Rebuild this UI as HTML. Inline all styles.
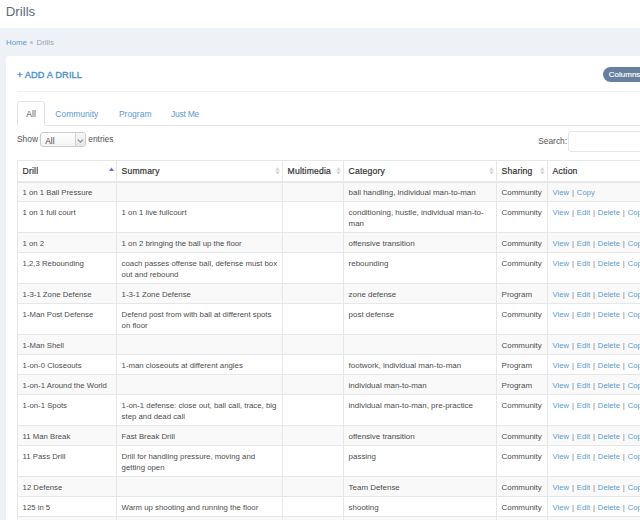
<!DOCTYPE html>
<html><head><meta charset="utf-8"><style>
*{box-sizing:border-box}
html,body{margin:0;padding:0}
body{width:640px;height:520px;overflow:hidden;background:#eef1f5;font-family:"Liberation Sans",sans-serif;position:relative;color:#333}
div,span{white-space:nowrap}
.hdr{position:absolute;left:0;top:0;width:640px;height:27.5px;background:#fff}
.title{position:absolute;left:5.7px;top:3.9px;font-size:13.3px;line-height:15px;color:#5e6d79}
.bc{position:absolute;left:6px;top:37.8px;font-size:7.8px;line-height:9px}
.bc .home{color:#5b9bd1}
.bc .dot{display:inline-block;width:3px;height:3px;border-radius:50%;background:#b9c1c9;margin:0 3.2px 1px 3.6px;vertical-align:middle}
.bc .cur{color:#9aa4ad}
.panel{position:absolute;left:6px;top:56px;width:700px;height:600px;background:#fff;border-radius:3px}
.add{position:absolute;left:17px;top:70.1px;font-size:9.3px;line-height:11px;color:#4b8fd0;-webkit-text-stroke:0.35px #4b8fd0;letter-spacing:0.1px}
.colbtn{position:absolute;left:603px;top:67px;width:60px;height:15.4px;border-radius:8px;background:#67809f;color:#fff;font-size:8px;line-height:15.4px;padding-left:5.8px;-webkit-text-stroke:0.15px #fff}
.div1{position:absolute;left:17px;top:90.5px;width:640px;height:1px;background:#eef1f5}
.tabline{position:absolute;left:17px;top:124.6px;width:640px;height:1px;background:#e2e4e6}
.tab{position:absolute;top:106.6px;font-size:8.5px;line-height:14px;color:#5b9bd1}
.tab.act{left:17.3px;top:101.2px;width:27.6px;height:24.4px;border:1px solid #e2e4e6;border-bottom:1px solid #fff;border-radius:3px 3px 0 0;background:#fff;color:#555;text-align:center;line-height:25.2px}
.show{position:absolute;left:17px;top:133.9px;font-size:8.4px;line-height:10px;color:#555}
.sel{position:absolute;left:39.8px;top:131.7px;width:46px;height:15px;border:1px solid #c9cdd1;border-radius:3px;background:linear-gradient(#fff,#f3f3f3)}
.sel .t{position:absolute;left:4.4px;top:3.1px;font-size:8.4px;line-height:10px;color:#444}
.sel .arr{position:absolute;left:34.5px;top:0;width:9.5px;height:13px;border-left:1px solid #cfd3d7;background:linear-gradient(#f7f7f7,#e6e6e6);border-radius:0 2px 2px 0}
.entries{position:absolute;left:88.3px;top:133.9px;font-size:8.4px;line-height:10px;color:#555}
.search{position:absolute;left:538.2px;top:136px;font-size:8.4px;line-height:10px;color:#555}
.sinput{position:absolute;left:568.2px;top:131.4px;width:100px;height:20.3px;border:1px solid #e1e5ec;border-radius:3px;background:#fff}
.tbl{position:absolute;left:0;top:0;width:640px;height:520px}
.hl{position:absolute;height:1px;background:#e5e7e9}
.vl{position:absolute;width:1px;background:#e5e7e9}
.bg{position:absolute;background:#f9f9f9}
.c{position:absolute;font-size:7.7px;line-height:11px;color:#4d4d4d}
.h{position:absolute;font-size:8.6px;line-height:12px;color:#333;font-weight:normal;-webkit-text-stroke:0.2px #333;letter-spacing:0.18px}
a{color:#5b9bd1;text-decoration:none}
s{text-decoration:none;color:#777;margin:0 0.8px}
.sort{position:absolute;width:5px;height:8px}
</style></head><body>
<div class="hdr"><div class="title">Drills</div></div>
<div class="bc"><span class="home">Home</span><span class="dot"></span><span class="cur">Drills</span></div>
<div class="panel"></div>
<div class="add">+ ADD A DRILL</div>
<div class="colbtn">Columns</div>
<div class="div1"></div>
<div class="tabline"></div>
<div class="tab act">All</div>
<div class="tab" style="left:55.3px">Community</div>
<div class="tab" style="left:118.9px">Program</div>
<div class="tab" style="left:171px;letter-spacing:-0.25px">Just Me</div>
<div class="show">Show</div>
<div class="sel"><span class="t">All</span><span class="arr"><svg style="position:absolute;left:1.2px;top:6.6px" width="7" height="5" viewBox="0 0 7 5"><path d="M0.8 0.6L3.4 3.2L6 0.6" fill="none" stroke="#8e8e8e" stroke-width="1.1"/></svg></span></div>
<div class="entries">entries</div>
<div class="search">Search:</div>
<div class="sinput"></div>
<div class="tbl">
<div class="bg" style="left:17px;top:183px;width:623px;height:18px"></div>
<div class="bg" style="left:17px;top:233px;width:623px;height:19px"></div>
<div class="bg" style="left:17px;top:284px;width:623px;height:19px"></div>
<div class="bg" style="left:17px;top:335px;width:623px;height:19px"></div>
<div class="bg" style="left:17px;top:375px;width:623px;height:19px"></div>
<div class="bg" style="left:17px;top:426px;width:623px;height:19px"></div>
<div class="bg" style="left:17px;top:477px;width:623px;height:19px"></div>
<div class="bg" style="left:17px;top:517px;width:623px;height:19px"></div>
<div class="hl" style="left:17px;top:160px;width:623px;height:1px"></div>
<div class="hl" style="left:17px;top:181px;width:623px;height:2px"></div>
<div class="hl" style="left:17px;top:201px;width:623px;height:1px"></div>
<div class="hl" style="left:17px;top:232px;width:623px;height:1px"></div>
<div class="hl" style="left:17px;top:252px;width:623px;height:1px"></div>
<div class="hl" style="left:17px;top:283px;width:623px;height:1px"></div>
<div class="hl" style="left:17px;top:303px;width:623px;height:1px"></div>
<div class="hl" style="left:17px;top:334px;width:623px;height:1px"></div>
<div class="hl" style="left:17px;top:354px;width:623px;height:1px"></div>
<div class="hl" style="left:17px;top:374px;width:623px;height:1px"></div>
<div class="hl" style="left:17px;top:394px;width:623px;height:1px"></div>
<div class="hl" style="left:17px;top:425px;width:623px;height:1px"></div>
<div class="hl" style="left:17px;top:445px;width:623px;height:1px"></div>
<div class="hl" style="left:17px;top:476px;width:623px;height:1px"></div>
<div class="hl" style="left:17px;top:496px;width:623px;height:1px"></div>
<div class="hl" style="left:17px;top:516px;width:623px;height:1px"></div>
<div class="hl" style="left:17px;top:536px;width:623px;height:1px"></div>
<div class="vl" style="left:17px;top:160px;height:360px"></div>
<div class="vl" style="left:116px;top:160px;height:360px"></div>
<div class="vl" style="left:282px;top:160px;height:360px"></div>
<div class="vl" style="left:343px;top:160px;height:360px"></div>
<div class="vl" style="left:496px;top:160px;height:360px"></div>
<div class="vl" style="left:547px;top:160px;height:360px"></div>
<div class="vl" style="left:760px;top:160px;height:360px"></div>
<div class="h" style="left:22.60px;top:165.06px">Drill</div>
<svg class="sort" style="left:108.5px;top:167px" viewBox="0 0 5 8"><path d="M0 4L2.5 0.5L5 4Z" fill="#6b6be0"/></svg>
<div class="h" style="left:121.60px;top:165.06px">Summary</div>
<svg class="sort" style="left:274.5px;top:167px" viewBox="0 0 5 8"><path d="M0.3 3.6L2.5 0.2L4.7 3.6Z M0.3 4.4L2.5 7.8L4.7 4.4Z" fill="#d2d2d2"/></svg>
<div class="h" style="left:287.60px;top:165.06px">Multimedia</div>
<svg class="sort" style="left:335.5px;top:167px" viewBox="0 0 5 8"><path d="M0.3 3.6L2.5 0.2L4.7 3.6Z M0.3 4.4L2.5 7.8L4.7 4.4Z" fill="#d2d2d2"/></svg>
<div class="h" style="left:348.60px;top:165.06px">Category</div>
<svg class="sort" style="left:488.5px;top:167px" viewBox="0 0 5 8"><path d="M0.3 3.6L2.5 0.2L4.7 3.6Z M0.3 4.4L2.5 7.8L4.7 4.4Z" fill="#d2d2d2"/></svg>
<div class="h" style="left:501.60px;top:165.06px">Sharing</div>
<svg class="sort" style="left:539.5px;top:167px" viewBox="0 0 5 8"><path d="M0.3 3.6L2.5 0.2L4.7 3.6Z M0.3 4.4L2.5 7.8L4.7 4.4Z" fill="#d2d2d2"/></svg>
<div class="h" style="left:552.60px;top:165.06px">Action</div>
<div class="c" style="left:22.60px;top:187.14px;font-size:7.75px">1 on 1 Ball Pressure</div>
<div class="c" style="left:348.60px;top:187.07px;font-size:7.95px">ball handling, individual man-to-man</div>
<div class="c" style="left:501.60px;top:187.07px;font-size:7.95px">Community</div>
<div class="c" style="left:552.60px;top:187.17px;font-size:7.65px"><a>View</a><s> | </s><a>Copy</a></div>
<div class="c" style="left:22.60px;top:207.14px;font-size:7.75px">1 on 1 full court</div>
<div class="c" style="left:121.60px;top:207.12px;font-size:7.8px">1 on 1 live fullcourt</div>
<div class="c" style="left:348.60px;top:207.07px;font-size:7.95px">conditioning, hustle, individual man-to-<br>man</div>
<div class="c" style="left:501.60px;top:207.07px;font-size:7.95px">Community</div>
<div class="c" style="left:552.60px;top:207.17px;font-size:7.65px"><a>View</a><s> | </s><a>Edit</a><s> | </s><a>Delete</a><s> | </s><a>Copy</a></div>
<div class="c" style="left:22.60px;top:238.14px;font-size:7.75px">1 on 2</div>
<div class="c" style="left:121.60px;top:238.12px;font-size:7.8px">1 on 2 bringing the ball up the floor</div>
<div class="c" style="left:348.60px;top:238.07px;font-size:7.95px">offensive transition</div>
<div class="c" style="left:501.60px;top:238.07px;font-size:7.95px">Community</div>
<div class="c" style="left:552.60px;top:238.17px;font-size:7.65px"><a>View</a><s> | </s><a>Edit</a><s> | </s><a>Delete</a><s> | </s><a>Copy</a></div>
<div class="c" style="left:22.60px;top:258.14px;font-size:7.75px">1,2,3 Rebounding</div>
<div class="c" style="left:121.60px;top:258.12px;font-size:7.8px">coach passes offense ball, defense must box<br>out and rebound</div>
<div class="c" style="left:348.60px;top:258.07px;font-size:7.95px">rebounding</div>
<div class="c" style="left:501.60px;top:258.07px;font-size:7.95px">Community</div>
<div class="c" style="left:552.60px;top:258.17px;font-size:7.65px"><a>View</a><s> | </s><a>Edit</a><s> | </s><a>Delete</a><s> | </s><a>Copy</a></div>
<div class="c" style="left:22.60px;top:289.14px;font-size:7.75px">1-3-1 Zone Defense</div>
<div class="c" style="left:121.60px;top:289.12px;font-size:7.8px">1-3-1 Zone Defense</div>
<div class="c" style="left:348.60px;top:289.07px;font-size:7.95px">zone defense</div>
<div class="c" style="left:501.60px;top:289.07px;font-size:7.95px">Program</div>
<div class="c" style="left:552.60px;top:289.17px;font-size:7.65px"><a>View</a><s> | </s><a>Edit</a><s> | </s><a>Delete</a><s> | </s><a>Copy</a></div>
<div class="c" style="left:22.60px;top:309.14px;font-size:7.75px">1-Man Post Defense</div>
<div class="c" style="left:121.60px;top:309.12px;font-size:7.8px">Defend post from with ball at different spots<br>on floor</div>
<div class="c" style="left:348.60px;top:309.07px;font-size:7.95px">post defense</div>
<div class="c" style="left:501.60px;top:309.07px;font-size:7.95px">Community</div>
<div class="c" style="left:552.60px;top:309.17px;font-size:7.65px"><a>View</a><s> | </s><a>Edit</a><s> | </s><a>Delete</a><s> | </s><a>Copy</a></div>
<div class="c" style="left:22.60px;top:340.14px;font-size:7.75px">1-Man Shell</div>
<div class="c" style="left:501.60px;top:340.07px;font-size:7.95px">Community</div>
<div class="c" style="left:552.60px;top:340.17px;font-size:7.65px"><a>View</a><s> | </s><a>Edit</a><s> | </s><a>Delete</a><s> | </s><a>Copy</a></div>
<div class="c" style="left:22.60px;top:360.14px;font-size:7.75px">1-on-0 Closeouts</div>
<div class="c" style="left:121.60px;top:360.12px;font-size:7.8px">1-man closeouts at different angles</div>
<div class="c" style="left:348.60px;top:360.07px;font-size:7.95px">footwork, individual man-to-man</div>
<div class="c" style="left:501.60px;top:360.07px;font-size:7.95px">Program</div>
<div class="c" style="left:552.60px;top:360.17px;font-size:7.65px"><a>View</a><s> | </s><a>Edit</a><s> | </s><a>Delete</a><s> | </s><a>Copy</a></div>
<div class="c" style="left:22.60px;top:380.14px;font-size:7.75px">1-on-1 Around the World</div>
<div class="c" style="left:348.60px;top:380.07px;font-size:7.95px">individual man-to-man</div>
<div class="c" style="left:501.60px;top:380.07px;font-size:7.95px">Program</div>
<div class="c" style="left:552.60px;top:380.17px;font-size:7.65px"><a>View</a><s> | </s><a>Edit</a><s> | </s><a>Delete</a><s> | </s><a>Copy</a></div>
<div class="c" style="left:22.60px;top:400.14px;font-size:7.75px">1-on-1 Spots</div>
<div class="c" style="left:121.60px;top:400.12px;font-size:7.8px">1-on-1 defense: close out, ball call, trace, big<br>step and dead call</div>
<div class="c" style="left:348.60px;top:400.07px;font-size:7.95px">individual man-to-man, pre-practice</div>
<div class="c" style="left:501.60px;top:400.07px;font-size:7.95px">Community</div>
<div class="c" style="left:552.60px;top:400.17px;font-size:7.65px"><a>View</a><s> | </s><a>Edit</a><s> | </s><a>Delete</a><s> | </s><a>Copy</a></div>
<div class="c" style="left:22.60px;top:431.14px;font-size:7.75px">11 Man Break</div>
<div class="c" style="left:121.60px;top:431.12px;font-size:7.8px">Fast Break Drill</div>
<div class="c" style="left:348.60px;top:431.07px;font-size:7.95px">offensive transition</div>
<div class="c" style="left:501.60px;top:431.07px;font-size:7.95px">Community</div>
<div class="c" style="left:552.60px;top:431.17px;font-size:7.65px"><a>View</a><s> | </s><a>Edit</a><s> | </s><a>Delete</a><s> | </s><a>Copy</a></div>
<div class="c" style="left:22.60px;top:451.14px;font-size:7.75px">11 Pass Drill</div>
<div class="c" style="left:121.60px;top:451.12px;font-size:7.8px">Drill for handling pressure, moving and<br>getting open</div>
<div class="c" style="left:348.60px;top:451.07px;font-size:7.95px">passing</div>
<div class="c" style="left:501.60px;top:451.07px;font-size:7.95px">Community</div>
<div class="c" style="left:552.60px;top:451.17px;font-size:7.65px"><a>View</a><s> | </s><a>Edit</a><s> | </s><a>Delete</a><s> | </s><a>Copy</a></div>
<div class="c" style="left:22.60px;top:482.14px;font-size:7.75px">12 Defense</div>
<div class="c" style="left:348.60px;top:482.07px;font-size:7.95px">Team Defense</div>
<div class="c" style="left:501.60px;top:482.07px;font-size:7.95px">Community</div>
<div class="c" style="left:552.60px;top:482.17px;font-size:7.65px"><a>View</a><s> | </s><a>Edit</a><s> | </s><a>Delete</a><s> | </s><a>Copy</a></div>
<div class="c" style="left:22.60px;top:502.14px;font-size:7.75px">125 in 5</div>
<div class="c" style="left:121.60px;top:502.12px;font-size:7.8px">Warm up shooting and running the floor</div>
<div class="c" style="left:348.60px;top:502.07px;font-size:7.95px">shooting</div>
<div class="c" style="left:501.60px;top:502.07px;font-size:7.95px">Community</div>
<div class="c" style="left:552.60px;top:502.17px;font-size:7.65px"><a>View</a><s> | </s><a>Edit</a><s> | </s><a>Delete</a><s> | </s><a>Copy</a></div>
<div class="c" style="left:22.60px;top:522.14px;font-size:7.75px">13 Drill</div>
<div class="c" style="left:501.60px;top:522.07px;font-size:7.95px">Community</div>
<div class="c" style="left:552.60px;top:522.17px;font-size:7.65px"><a>View</a><s> | </s><a>Edit</a><s> | </s><a>Delete</a><s> | </s><a>Copy</a></div>
</div>
</body></html>
